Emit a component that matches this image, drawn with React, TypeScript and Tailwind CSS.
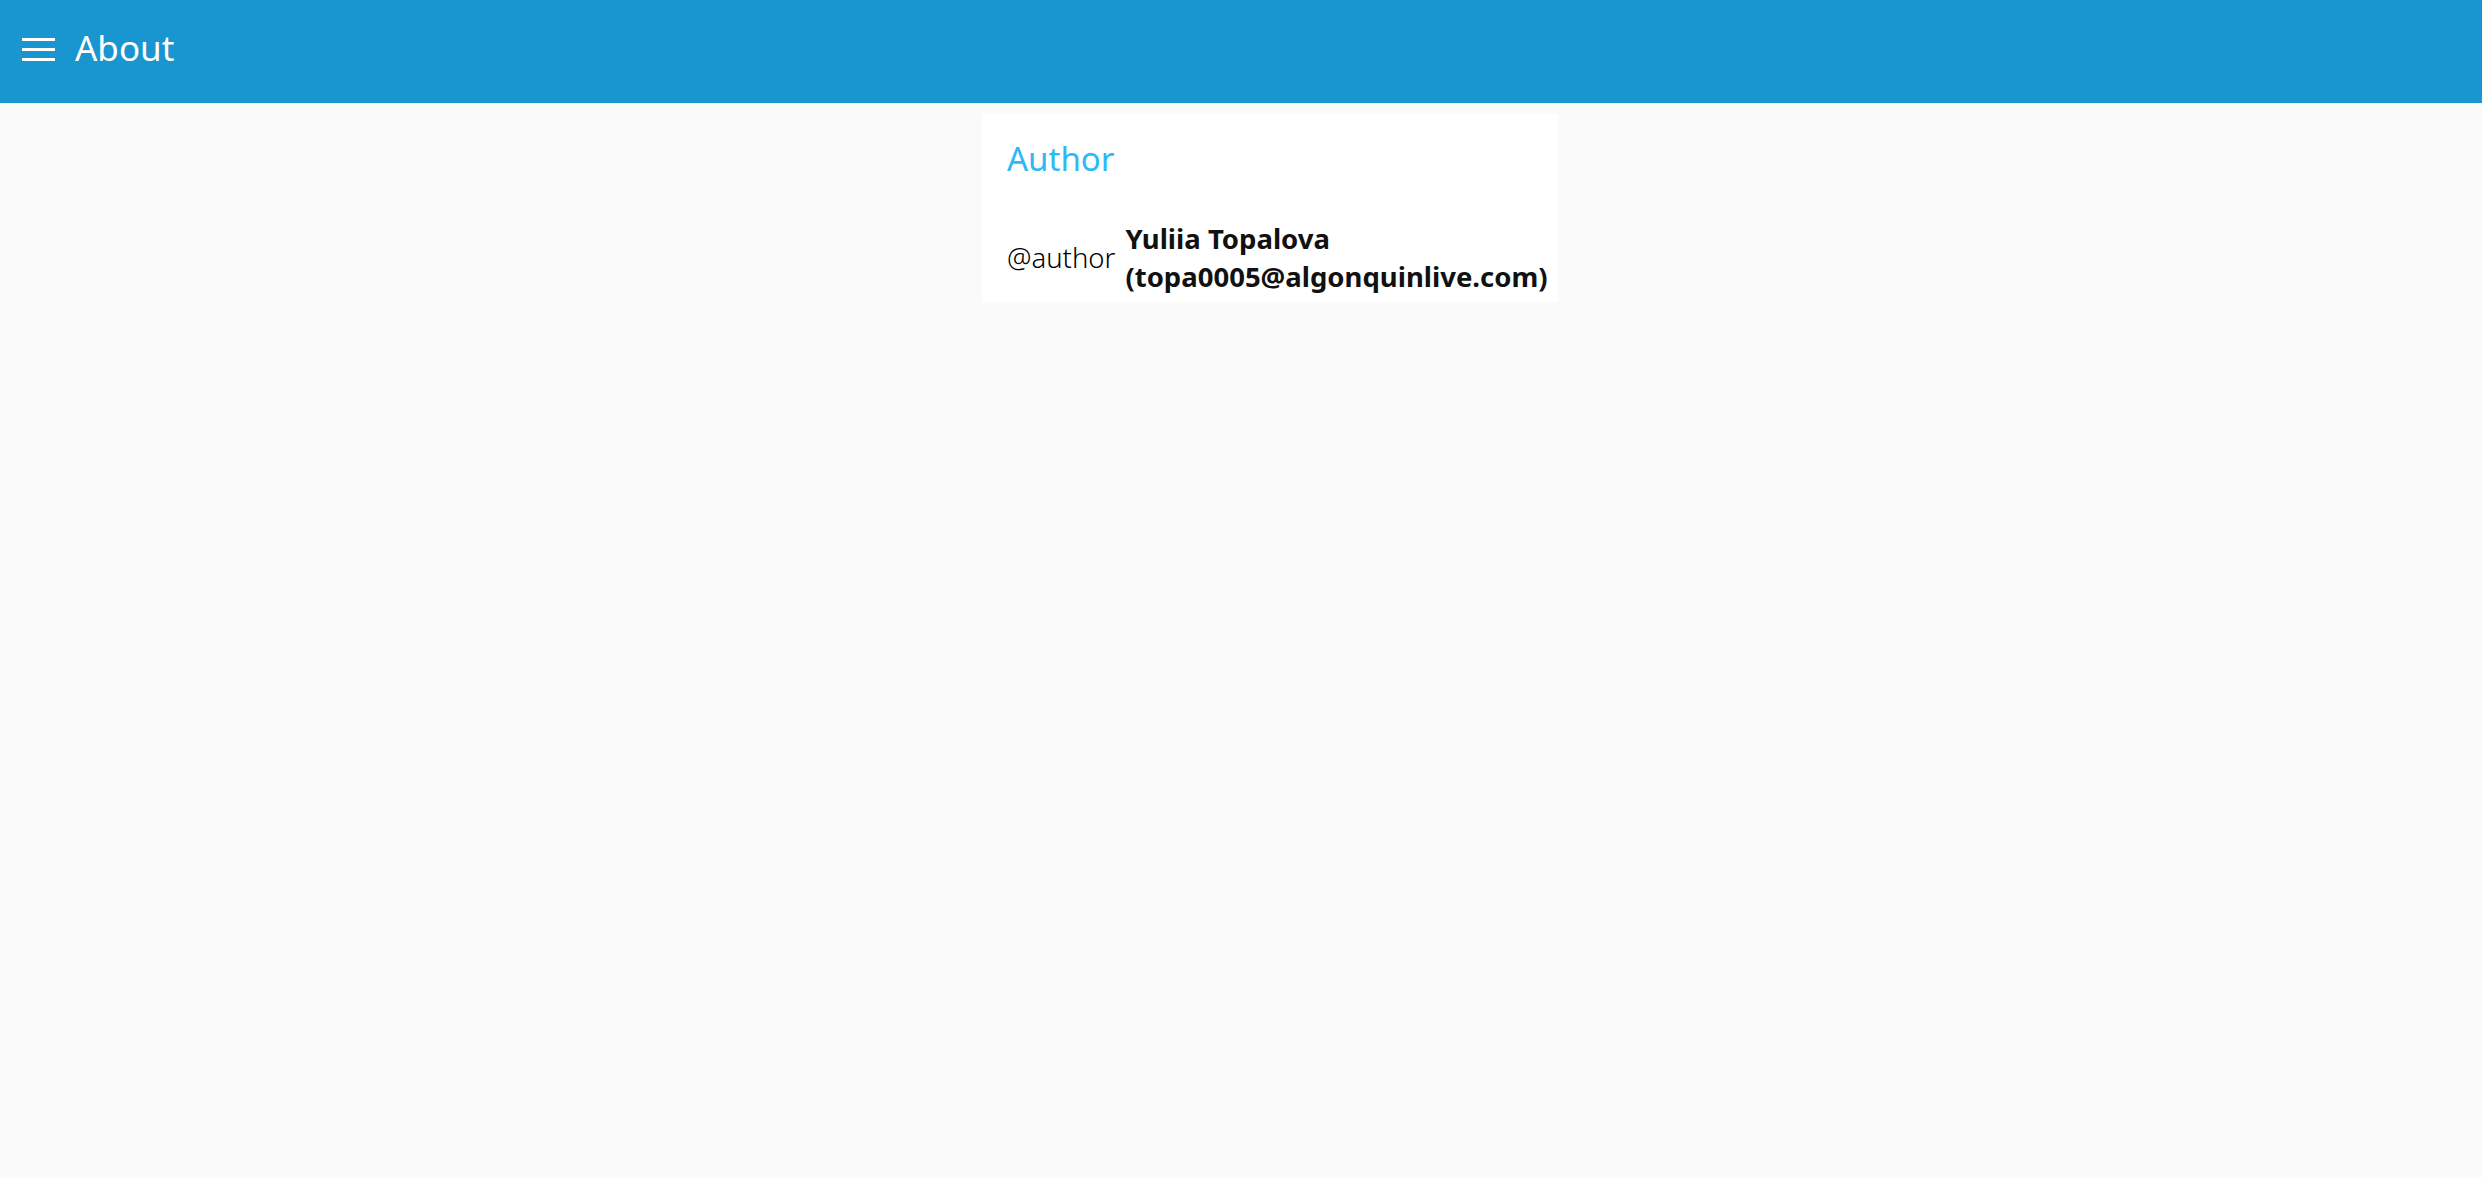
import React from 'react';

function MenuIcon() {
  return (
    <svg width="33" height="23" viewBox="0 0 33 23" fill="none">
      <rect x="0" y="0" width="33" height="3" fill="white" />
      <rect x="0" y="10" width="33" height="3" fill="white" />
      <rect x="0" y="20" width="33" height="3" fill="white" />
    </svg>
  );
}

export default function App() {
  return (
    <div className="min-h-screen bg-[#fafafa] font-['Noto_Sans','Open_Sans',sans-serif]">
      <header className="flex h-[103px] items-center bg-[#1996d0] px-[22px] pb-[5px] text-white">
        <button type="button" className="flex items-center">
          <MenuIcon />
        </button>
        <h1 className="ml-[20px] pb-[3px] text-[35px] leading-none">About</h1>
      </header>

      <main className="flex justify-center pt-[11px]">
        <section className="ml-[58px] w-[576px] bg-white pt-[23px] pb-[6px] pl-[25px] pr-[6px]">
          <h2 className="text-[33px] leading-[44px] text-[#2cb9f8]">Author</h2>
          <table className="mt-[39px]">
            <tbody>
              <tr>
                <td className="align-middle text-[27.5px] font-light text-black">@author</td>
                <td className="pl-[10px] align-middle text-[27.5px] font-bold leading-[38px] text-[#111]">
                  Yuliia Topalova
                  <br />
                  (topa0005@algonquinlive.com)
                </td>
              </tr>
            </tbody>
          </table>
        </section>
      </main>
    </div>
  );
}
